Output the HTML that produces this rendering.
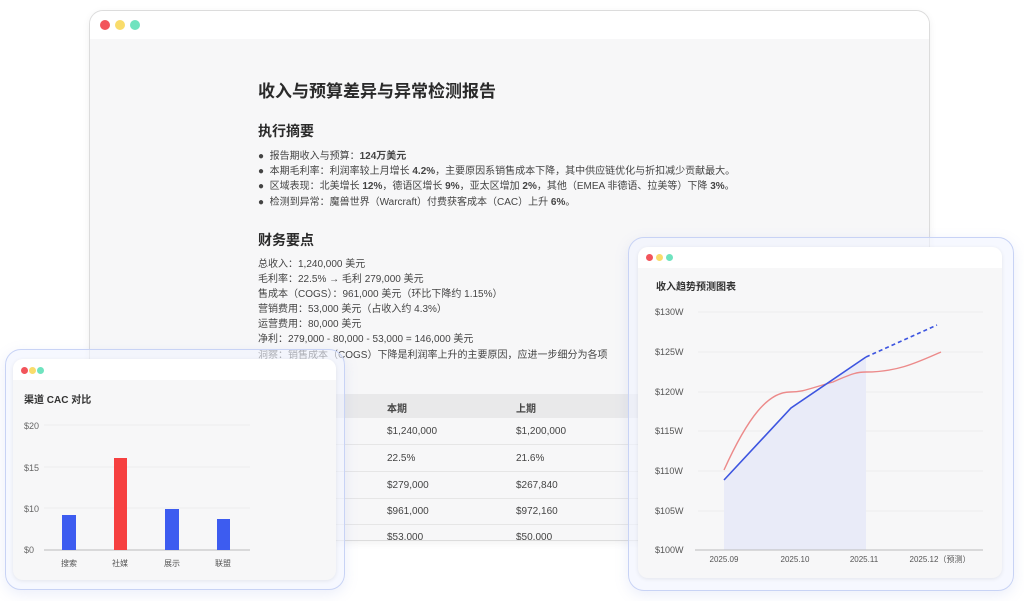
<!DOCTYPE html>
<html><head><meta charset="utf-8"><style>
*{margin:0;padding:0;box-sizing:border-box}
body{width:1024px;height:601px;background:#fff;position:relative;overflow:hidden;font-family:"Liberation Sans","Noto Sans CJK SC",sans-serif;color:#333}
.win{position:absolute;left:89px;top:10px;width:841px;height:531px;border:1px solid #dcdcdc;border-radius:14px;background:#f7f7f8;overflow:hidden;box-shadow:0 2px 8px rgba(0,0,0,.06)}
.tb{height:28px;background:#fff;position:relative}
.dot{position:absolute;width:10px;height:10px;border-radius:50%}
.r{background:#f2545b}.y{background:#f9dc6b}.g{background:#6fe3bf}
.t{position:absolute;white-space:nowrap}
h1{font-size:17px;font-weight:700;color:#2a2a2a}
h2{font-size:14px;font-weight:700;color:#2a2a2a}
.s{font-size:10px;color:#444}
.card{position:absolute;border:1px solid #c8d3f5;border-radius:16px;background:rgba(240,243,255,.6);box-shadow:0 4px 14px rgba(120,140,220,.15)}
.inner{position:absolute;background:#f7f7f8;border-radius:10px;overflow:hidden;box-shadow:0 1px 4px rgba(0,0,0,.08)}
.inner .tb{height:21px}
</style></head><body>
<div class="win">
 <div class="tb"><div class="dot r" style="left:10px;top:9px"></div><div class="dot y" style="left:25px;top:9px"></div><div class="dot g" style="left:40px;top:9px"></div></div>
 <div class="t" style="left:168px;top:66px"><h1>收入与预算差异与异常检测报告</h1></div>
 <div class="t" style="left:168px;top:110px"><h2>执行摘要</h2></div>
 <div class="t s" style="left:168px;top:138px;line-height:15.2px">
 ● &nbsp;报告期收入与预算：<b>124万美元</b><br>
 ● &nbsp;本期毛利率：利润率较上月增长 <b>4.2%</b>，主要原因系销售成本下降，其中供应链优化与折扣减少贡献最大。<br>
 ● &nbsp;区域表现：北美增长 <b>12%</b>，德语区增长 <b>9%</b>，亚太区增加 <b>2%</b>，其他（EMEA 非德语、拉美等）下降 <b>3%</b>。<br>
 ● &nbsp;检测到异常：魔兽世界（Warcraft）付费获客成本（CAC）上升 <b>6%</b>。</div>
 <div class="t" style="left:168px;top:219px"><h2>财务要点</h2></div>
 <div class="t s" style="left:168px;top:246px;line-height:15.1px">
 总收入：1,240,000 美元<br>毛利率：22.5% → 毛利 279,000 美元<br>售成本（COGS）：961,000 美元（环比下降约 1.15%）<br>营销费用：53,000 美元（占收入约 4.3%）<br>运营费用：80,000 美元<br>净利：279,000 - 80,000 - 53,000 = 146,000 美元<br>洞察：销售成本（COGS）下降是利润率上升的主要原因，应进一步细分为各项<br>可持续性。</div>
 <div style="position:absolute;left:168px;top:383px;width:700px;height:24px;background:#e9e9ea"></div>
 <div class="t s" style="left:297px;top:389px;font-weight:700">本期</div>
 <div class="t s" style="left:426px;top:389px;font-weight:700">上期</div>
 <div class="t s" style="left:297px;top:415px">$1,240,000</div><div class="t s" style="left:426px;top:415px">$1,200,000</div>
 <div style="position:absolute;left:168px;top:433px;width:700px;height:1px;background:#e6e6e6"></div>
 <div class="t s" style="left:297px;top:442px">22.5%</div><div class="t s" style="left:426px;top:442px">21.6%</div>
 <div style="position:absolute;left:168px;top:460px;width:700px;height:1px;background:#e6e6e6"></div>
 <div class="t s" style="left:297px;top:469px">$279,000</div><div class="t s" style="left:426px;top:469px">$267,840</div>
 <div style="position:absolute;left:168px;top:487px;width:700px;height:1px;background:#e6e6e6"></div>
 <div class="t s" style="left:297px;top:495px">$961,000</div><div class="t s" style="left:426px;top:495px">$972,160</div>
 <div style="position:absolute;left:168px;top:513px;width:700px;height:1px;background:#e6e6e6"></div>
 <div class="t s" style="left:297px;top:521px">$53,000</div><div class="t s" style="left:426px;top:521px">$50,000</div>
</div>

<div class="card" style="left:5px;top:349px;width:340px;height:241px"></div>
<div class="inner" style="left:13px;top:359px;width:323px;height:221px">
 <div class="tb"><div class="dot r" style="left:8px;top:8px;width:7px;height:7px"></div><div class="dot y" style="left:16px;top:8px;width:7px;height:7px"></div><div class="dot g" style="left:24px;top:8px;width:7px;height:7px"></div></div>
 <svg width="323" height="221" style="position:absolute;left:0;top:0" font-family="Liberation Sans,Noto Sans CJK SC,sans-serif">
  <text x="11" y="44" font-size="10" font-weight="700" fill="#333">渠道 CAC 对比</text>
  <g font-size="9" fill="#666"><text x="11" y="70">$20</text><text x="11" y="112">$15</text><text x="11" y="153">$10</text><text x="11" y="194">$0</text></g>
  <g stroke="#eee"><line x1="31" y1="66" x2="237" y2="66"/><line x1="31" y1="108" x2="237" y2="108"/><line x1="31" y1="149" x2="237" y2="149"/></g>
  <line x1="31" y1="191" x2="237" y2="191" stroke="#bbb"/>
  <rect x="49" y="156" width="14" height="35" fill="#3d5cf0"/>
  <rect x="101" y="99" width="13" height="92" fill="#f64040"/>
  <rect x="152" y="150" width="14" height="41" fill="#3d5cf0"/>
  <rect x="204" y="160" width="13" height="31" fill="#3d5cf0"/>
  <g font-size="8" fill="#555" text-anchor="middle"><text x="56" y="207">搜索</text><text x="107" y="207">社媒</text><text x="159" y="207">展示</text><text x="210" y="207">联盟</text></g>
 </svg>
</div>

<div class="card" style="left:628px;top:237px;width:386px;height:354px"></div>
<div class="inner" style="left:638px;top:247px;width:364px;height:331px">
 <div class="tb"><div class="dot r" style="left:8px;top:7px;width:7px;height:7px"></div><div class="dot y" style="left:18px;top:7px;width:7px;height:7px"></div><div class="dot g" style="left:28px;top:7px;width:7px;height:7px"></div></div>
 <svg width="364" height="331" style="position:absolute;left:0;top:0" font-family="Liberation Sans,Noto Sans CJK SC,sans-serif">
  <text x="18" y="43" font-size="10" font-weight="700" fill="#333">收入趋势预测图表</text>
  <g font-size="9" fill="#555"><text x="17" y="68">$130W</text><text x="17" y="108">$125W</text><text x="17" y="148">$120W</text><text x="17" y="187">$115W</text><text x="17" y="227">$110W</text><text x="17" y="267">$105W</text><text x="17" y="306">$100W</text></g>
  <g stroke="#eee"><line x1="60" y1="65" x2="345" y2="65"/><line x1="60" y1="105" x2="345" y2="105"/><line x1="60" y1="145" x2="345" y2="145"/><line x1="60" y1="184" x2="345" y2="184"/><line x1="60" y1="224" x2="345" y2="224"/><line x1="60" y1="264" x2="345" y2="264"/></g>
  <path d="M86 233 L153 161 L228 110 L228 303 L86 303 Z" fill="#e9ebf8"/>
  <line x1="57" y1="303" x2="345" y2="303" stroke="#bbb"/>
  <path d="M86 223 C110 170,130 145,152 145 C165 145,170 142,195 135 C215 126,220 125,228 125 C260 125,280 115,303 105" fill="none" stroke="#ec8a8a" stroke-width="1.4"/>
  <path d="M86 233 L153 161 L228 110" fill="none" stroke="#3d55e0" stroke-width="1.6"/>
  <path d="M228 110 L299 78" fill="none" stroke="#3d55e0" stroke-width="1.6" stroke-dasharray="4 3"/>
  <g font-size="8" fill="#555" text-anchor="middle"><text x="86" y="315">2025.09</text><text x="157" y="315">2025.10</text><text x="226" y="315">2025.11</text><text x="302" y="315">2025.12（预测）</text></g>
 </svg>
</div>
</body></html>
